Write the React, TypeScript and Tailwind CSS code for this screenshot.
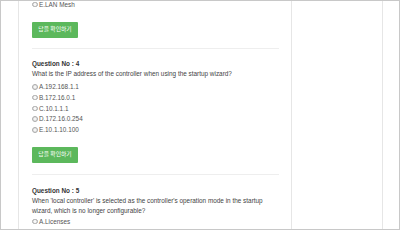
import React from "react";

const font = { fontFamily: '"Liberation Sans", Arial, "Noto Sans CJK KR", sans-serif' };

function Option({ label }: { label: string }) {
	return (
		<div className="flex h-[10.7px] items-center gap-[1.5px] text-[6.4px] text-[#555]">
			<span className="flex h-[5.5px] w-[5.5px] shrink-0 items-center justify-center rounded-full border-[0.8px] border-[#aaa] bg-[#e6e6e6]">
				<span className="h-[2.5px] w-[2.5px] rounded-full bg-[#fafafa]" />
			</span>
			<span>{label}</span>
		</div>
	);
}

function CheckButton() {
	return (
		<button
			type="button"
			className="flex h-[16px] w-[46px] items-center justify-center rounded-[1px] bg-[#5cb85c] text-[5.8px] text-white"
			style={{ fontFamily: '"Noto Sans CJK KR", sans-serif' }}
		>
			답을 확인하기
		</button>
	);
}

export default function App() {
	return (
		<div className="flex h-[230px] w-[400px] overflow-hidden border border-[#c8c8c8] bg-white" style={font}>
			<div className="w-[18px] shrink-0 border-r border-[#e6e6e6]" />

			<main className="w-[272px] shrink-0 pl-[13px] pr-[12px]">
				<div className="-mt-[2px]">
					<Option label="E.LAN Mesh" />
				</div>
				<div className="mt-[12px]">
					<CheckButton />
				</div>
				<hr className="mt-[10px] border-t border-[#eeeeee]" />

				<section className="mt-[10px]">
					<p className="h-[10px] text-[6.4px] leading-[10px] font-bold text-[#333]">Question No : 4</p>
					<p className="text-[6.4px] leading-[10px] text-[#444]">
						What is the IP address of the controller when using the startup wizard?
					</p>
					<div className="mt-[3px]">
						<Option label="A.192.168.1.1" />
						<Option label="B.172.16.0.1" />
						<Option label="C.10.1.1.1" />
						<Option label="D.172.16.0.254" />
						<Option label="E.10.1.10.100" />
					</div>
					<div className="mt-[11.5px]">
						<CheckButton />
					</div>
				</section>
				<hr className="mt-[11px] border-t border-[#eeeeee]" />

				<section className="mt-[11px]">
					<p className="h-[10px] text-[6.4px] leading-[10px] font-bold text-[#333]">Question No : 5</p>
					<p className="text-[6.4px] leading-[10px] text-[#444]">
						When 'local controller' is selected as the controller's operation mode in the startup wizard, which
						is no longer configurable?
					</p>
					<div className="mt-[0.5px]">
						<Option label="A.Licenses" />
					</div>
				</section>
			</main>

			<div className="w-[91px] shrink-0 border-l border-[#e6e6e6]" />
			<div className="flex-1 border-l border-[#e6e6e6]" />
		</div>
	);
}
